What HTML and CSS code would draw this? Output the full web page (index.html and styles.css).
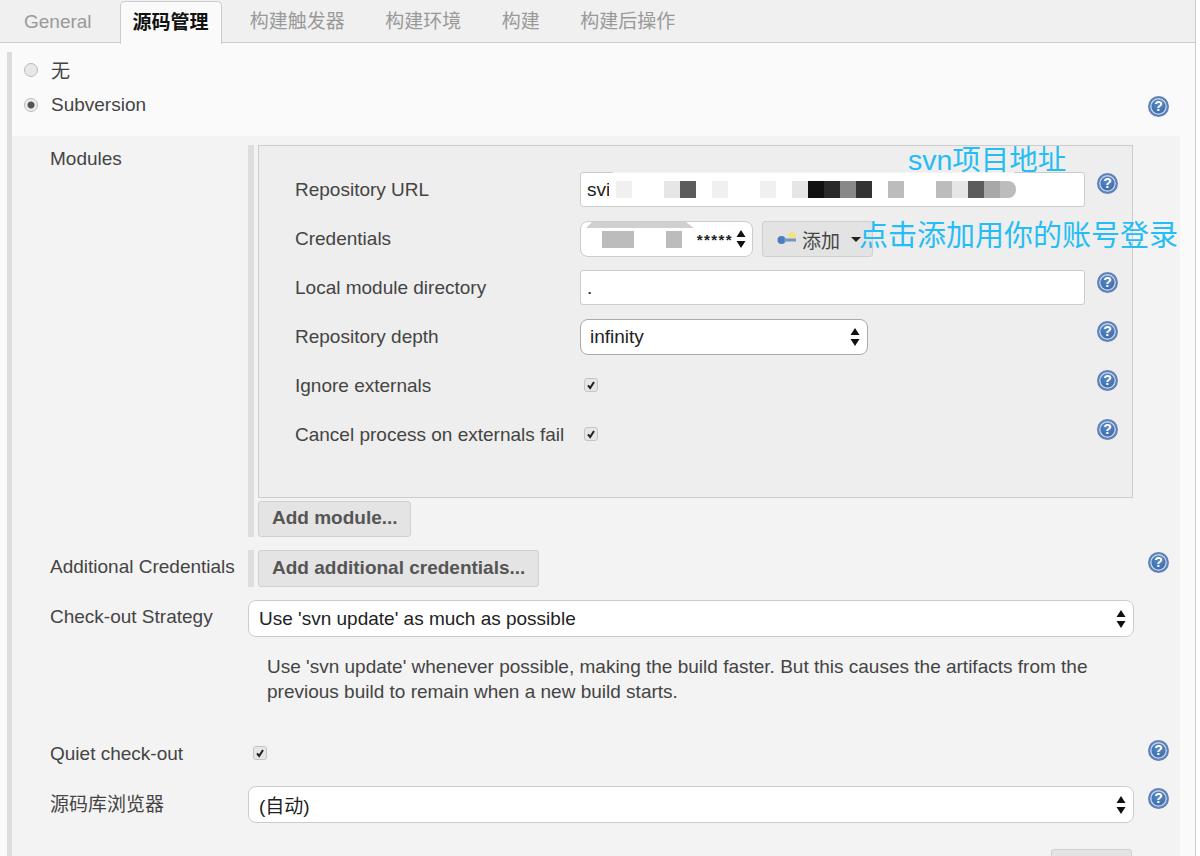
FILE: index.html
```html
<!DOCTYPE html>
<html lang="zh">
<head>
  <meta charset="UTF-8">
  <meta name="viewport" content="width=device-width, initial-scale=1.0">
  <title>源码管理</title>
  <link rel="stylesheet" href="styles.css">
</head>
<body>
  <svg class="defs" width="0" height="0">
    <symbol id="arrows" viewBox="0 0 10 18">
      <path d="M5 0 9.5 7H.5zM5 18 .5 11h9z" fill="#111"/>
    </symbol>
    <symbol id="check" viewBox="0 0 14 14">
      <path d="M3.5 7.5 6 10.5 10.5 3.5" fill="none" stroke="#222" stroke-width="2.4"/>
    </symbol>
  </svg>

  <div class="page">
    <div class="tabs">
      <span class="tab">General</span>
      <span class="tab active">源码管理</span>
      <span class="tab">构建触发器</span>
      <span class="tab">构建环境</span>
      <span class="tab">构建</span>
      <span class="tab">构建后操作</span>
    </div>

    <div class="panel">
      <div class="radio-row">
        <span class="radio"></span>
        <span>无</span>
      </div>
      <div class="radio-row">
        <span class="radio checked"></span>
        <span>Subversion</span>
        <span class="help help-radio">?</span>
      </div>

      <div class="section">
        <div class="row row-modules">
          <div class="label">Modules</div>
          <div class="barred">
            <div class="module-box">
              <div class="field">
                <div class="field-label">Repository URL</div>
                <div class="input url-input"><span class="clip">svi</span><span class="mosaic"><i class="m1"></i><i class="w"></i><i class="w"></i><i class="m2"></i><i class="m6"></i><i class="w"></i><i class="m1"></i><i class="w"></i><i class="w"></i><i class="m1"></i><i class="w"></i><i class="m2"></i><i class="m9"></i><i class="m8"></i><i class="m5"></i><i class="m7"></i><i class="w"></i><i class="m3"></i><i class="w"></i><i class="w"></i><i class="m3"></i><i class="m2"></i><i class="m6"></i><i class="m4"></i><i class="m3 end"></i></span></div>
                <span class="help">?</span>
              </div>
              <div class="field">
                <div class="field-label">Credentials</div>
                <div class="creds">
                  <div class="select cred-select">
                    <span class="mosaic"><i class="w"></i><i class="m3"></i><i class="m3"></i><i class="w"></i><i class="w"></i><i class="m3"></i></span>
                    <span class="stars">*****</span>
                    <svg class="arrows"><use href="#arrows"/></svg>
                  </div>
                  <div class="add-btn">
                    <svg class="key" viewBox="0 0 20 14">
                      <circle cx="15" cy="3.5" r="3.5" fill="#f4e27a"/>
                      <circle cx="4.5" cy="8" r="4" fill="#4f7cc0"/>
                      <rect x="7" y="6.5" width="12" height="3" fill="#6f95cf"/>
                    </svg>
                    <span>添加</span>
                    <span class="caret"></span>
                  </div>
                </div>
              </div>
              <div class="field">
                <div class="field-label">Local module directory</div>
                <div class="input">.</div>
                <span class="help">?</span>
              </div>
              <div class="field">
                <div class="field-label">Repository depth</div>
                <div class="select depth-select">
                  <span>infinity</span>
                  <svg class="arrows"><use href="#arrows"/></svg>
                </div>
                <span class="help help-far">?</span>
              </div>
              <div class="field">
                <div class="field-label">Ignore externals</div>
                <span class="checkbox"><svg><use href="#check"/></svg></span>
                <span class="help help-check">?</span>
              </div>
              <div class="field">
                <div class="field-label">Cancel process on externals fail</div>
                <span class="checkbox"><svg><use href="#check"/></svg></span>
                <span class="help help-check">?</span>
              </div>
            </div>
            <div class="btn module-btn">Add module...</div>
          </div>
        </div>

        <div class="row row-credentials">
          <div class="label">Additional Credentials</div>
          <div class="barred">
            <div class="btn credentials-btn">Add additional credentials...</div>
          </div>
          <span class="help">?</span>
        </div>

        <div class="row row-strategy">
          <div class="label">Check-out Strategy</div>
          <div class="select wide-select">
            <span>Use 'svn update' as much as possible</span>
            <svg class="arrows"><use href="#arrows"/></svg>
          </div>
        </div>

        <div class="description">
          Use 'svn update' whenever possible, making the build faster. But this causes the artifacts from the<br>
          previous build to remain when a new build starts.
        </div>

        <div class="row row-quiet">
          <div class="label">Quiet check-out</div>
          <span class="checkbox quiet-check"><svg><use href="#check"/></svg></span>
          <span class="help">?</span>
        </div>

        <div class="row row-browser">
          <div class="label">源码库浏览器</div>
          <div class="select wide-select">
            <span>(自动)</span>
            <svg class="arrows"><use href="#arrows"/></svg>
          </div>
          <span class="help">?</span>
        </div>

        <div class="bottom-row">
          <div class="btn bottom-btn"></div>
        </div>
      </div>
    </div>

    <div class="note note-url">svn项目地址</div>
    <div class="note note-add">点击添加用你的账号登录</div>
  </div>
</body>
</html>
```

FILE: styles.css
```css
html, body {
  margin: 0;
  padding: 0;
  background-color: #fff;
  overflow: hidden;
}
body {
  font-family: "Liberation Sans", "Noto Sans CJK SC", sans-serif;
  font-size: 19px;
  color: #444;
}
.defs {
  position: absolute;
}
.page {
  position: relative;
  width: 1195px;
  height: 856px;
  border-right: 1px solid #ccc;
  background-color: #fafafa;
  overflow: hidden;
}

/* tabs */
.tabs {
  display: flex;
  height: 42px;
  padding-left: 10px;
  background-color: #f0f0f0;
  border-bottom: 1px solid #ccc;
}
.tab {
  padding: 0 14px;
  margin-right: 12.5px;
  line-height: 44px;
  color: #999;
}
.tab:first-child {
  margin-right: 14px;
}
.tab.active {
  height: 43px;
  margin: 1px 14px 0 0;
  padding: 0 12px;
  background-color: #fafafa;
  border: 1px solid #ccc;
  border-bottom: none;
  border-radius: 5px 5px 0 0;
  color: #111;
  font-weight: bold;
  box-sizing: border-box;
  line-height: 41px;
}

/* main panel */
.panel {
  margin: 9px 0 0 7px;
  border-left: 5px solid #ddd;
  height: 820px;
}
.radio-row {
  display: flex;
  align-items: center;
  height: 35px;
  padding-left: 12px;
}
.radio-row span:nth-child(2) {
  margin-left: 13px;
}
.radio {
  width: 14px;
  height: 14px;
  border-radius: 50%;
  border: 1px solid #bbb;
  background-color: #e8e8e8;
  box-sizing: border-box;
}
.radio.checked {
  background: radial-gradient(circle, #555 0, #555 3px, #eee 4px);
}
.help {
  flex: none;
  display: block;
  width: 21px;
  height: 21px;
  border: 2px solid #5f83b9;
  border-radius: 50%;
  background: radial-gradient(circle at 50% 35%, #5c8ac8, #2f5f9f);
  box-shadow: inset 0 0 0 1.5px #c6d5ea;
  box-sizing: border-box;
  color: #fff;
  font-size: 14px;
  font-weight: bold;
  line-height: 17px;
  text-align: center;
}
.help-radio {
  margin-left: auto;
  margin-right: 26px;
  margin-top: 4px;
}

/* subversion section */
.section {
  margin-top: 14px;
  padding: 9px 0 0 38px;
  width: 1168px;
  background-color: #f3f3f3;
  box-sizing: border-box;
}
.row {
  display: flex;
  align-items: flex-start;
}
.label {
  flex: none;
  width: 198px;
}
.row-modules .label {
  line-height: 28px;
}
.barred {
  width: 885px;
  border-left: 6px solid #ddd;
  padding-left: 4px;
  box-sizing: border-box;
}
.module-box {
  height: 353px;
  padding: 26px 0 0 36px;
  background-color: #eee;
  border: 1px solid #ccc;
  box-sizing: border-box;
}
.field {
  display: flex;
  align-items: flex-start;
  height: 35px;
  margin-bottom: 14px;
}
.field-label {
  flex: none;
  width: 285px;
  line-height: 35px;
}
.input {
  display: flex;
  align-items: center;
  width: 505px;
  height: 35px;
  padding-left: 6px;
  background-color: #fff;
  border: 1px solid #ccc;
  border-radius: 3px;
  box-sizing: border-box;
  color: #222;
}
.url-input {
  position: relative;
}
/* the blur over the url also wipes the top border */
.url-input::before {
  content: "";
  position: absolute;
  left: 32px;
  right: 70px;
  top: -1px;
  height: 4px;
  background-color: #fff;
  opacity: 0.8;
}
.clip {
  width: 22px;
  overflow: hidden;
}
.mosaic {
  display: flex;
  height: 17px;
  margin-left: 7px;
}
.mosaic i {
  display: block;
  width: 16px;
  height: 17px;
}
.mosaic .w { background-color: #fff; }
.mosaic .m1 { background-color: #f0f0f0; }
.mosaic .m2 { background-color: #e6e6e6; }
.mosaic .m3 { background-color: #bcbcbc; }
.mosaic .m4 { background-color: #a8a8a8; }
.mosaic .m5 { background-color: #888; }
.mosaic .m6 { background-color: #5c5c5c; }
.mosaic .m7 { background-color: #333; }
.mosaic .m8 { background-color: #2a2a2a; }
.mosaic .m9 { background-color: #111; }
.mosaic .end { border-radius: 0 8px 8px 0; }
.field > .help {
  margin-left: 12px;
  margin-top: 1px;
}
.field + .field > .help {
  margin-top: 2px;
}
.select {
  display: flex;
  align-items: center;
  justify-content: space-between;
  background-color: #fff;
  border: 1px solid #ccc;
  border-radius: 8px;
  box-sizing: border-box;
  color: #222;
}
.arrows {
  flex: none;
  width: 10px;
  height: 18px;
}
.creds {
  display: flex;
  gap: 9px;
}
.cred-select {
  position: relative;
  width: 173px;
  height: 36px;
  padding: 0 6px 0 5px;
}
/* grey edge of the blur along the top of the select */
.cred-select::before {
  content: "";
  position: absolute;
  left: 5px;
  top: 0;
  width: 108px;
  height: 6px;
  background-color: #d0d0d0;
  clip-path: polygon(6px 0, 100px 0, 100% 100%, 0 100%);
}
.cred-select .mosaic {
  margin-left: 0;
}
.stars {
  margin-left: auto;
  margin-right: 3px;
  font-size: 15px;
  font-weight: bold;
  letter-spacing: 1.4px;
}
.add-btn {
  display: flex;
  align-items: center;
  width: 111px;
  height: 36px;
  padding-left: 14px;
  background-color: #e3e3e3;
  border: 1px solid #d0d0d0;
  border-radius: 3px;
  box-sizing: border-box;
}
.key {
  width: 20px;
  height: 14px;
  margin-right: 5px;
}
.caret {
  margin-left: 11px;
  border: 5px solid transparent;
  border-top-color: #222;
  border-bottom: none;
}
.depth-select {
  width: 288px;
  height: 36px;
  padding: 0 7px 0 9px;
  border-color: #aaa;
}
.field > .help-far {
  margin-left: 229px;
}
.checkbox {
  flex: none;
  display: block;
  width: 14px;
  height: 14px;
  margin: 10px 0 0 4px;
  background-color: #e6e6e6;
  border: 1px solid #c4c4c4;
  border-radius: 3px;
  box-sizing: border-box;
}
.checkbox svg {
  display: block;
  width: 12px;
  height: 12px;
}
.field > .help-check {
  margin-left: 499px;
}
.btn {
  display: flex;
  align-items: center;
  padding: 0 13px 2px;
  background-color: #e4e4e4;
  border: 1px solid #d0d0d0;
  border-radius: 3px;
  box-sizing: border-box;
  color: #555;
  font-weight: bold;
  white-space: nowrap;
}
.module-btn {
  width: 153px;
  height: 36px;
  margin-top: 3px;
}
.row-credentials {
  margin-top: 13px;
}
.row-credentials .label {
  line-height: 34px;
}
.credentials-btn {
  width: 281px;
  height: 37px;
}
.row-credentials > .help {
  margin-left: 15px;
  margin-top: 2px;
}
.row-strategy {
  margin-top: 13px;
}
.row-strategy .label {
  line-height: 34px;
}
.row-browser .label {
  line-height: 37px;
}
.wide-select {
  width: 886px;
  height: 37px;
  padding: 0 7px 0 10px;
}
.description {
  margin: 17px 0 0 217px;
  line-height: 25px;
  width: 860px;
  white-space: nowrap;
}
.row-quiet {
  margin-top: 35px;
}
.row-quiet .label {
  line-height: 30px;
}
.quiet-check {
  margin: 7px 0 0 5px;
}
.row-quiet > .help {
  margin-left: 881px;
  margin-top: 1px;
}
.row-browser {
  margin-top: 17px;
}
.row-browser > .help {
  margin-left: 14px;
  margin-top: 2px;
}
.bottom-row {
  display: flex;
  padding: 26px 0 0 1001px;
}
.bottom-btn {
  width: 81px;
  height: 30px;
}

/* blue notes typed over the screenshot */
.note {
  position: absolute;
  color: #25bdf5;
  white-space: nowrap;
}
.note-url {
  left: 908px;
  top: 143px;
  font-size: 28.5px;
  line-height: 34px;
}
.note-add {
  left: 859px;
  top: 219px;
  font-size: 29px;
  line-height: 34px;
}
```
